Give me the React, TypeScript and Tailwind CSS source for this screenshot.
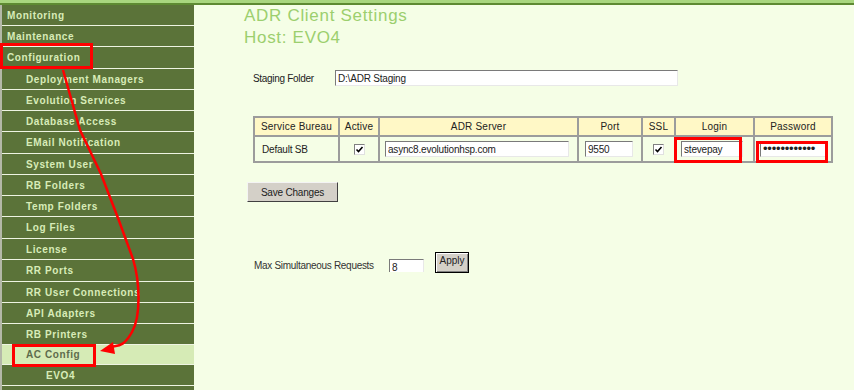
import React from 'react';

const navItems = [
  { label: 'Monitoring', indent: 'pl-[5px]', h: 'h-[21px]' },
  { label: 'Maintenance', indent: 'pl-[5px]', h: 'h-[21px]' },
  { label: 'Configuration', indent: 'pl-[5px]', h: 'h-[22px]' },
  { label: 'Deployment Managers', indent: 'pl-[24px]', h: 'h-[21px]' },
  { label: 'Evolution Services', indent: 'pl-[24px]', h: 'h-[21px]' },
  { label: 'Database Access', indent: 'pl-[24px]', h: 'h-[21px]' },
  { label: 'EMail Notification', indent: 'pl-[24px]', h: 'h-[22px]' },
  { label: 'System User', indent: 'pl-[24px]', h: 'h-[21px]' },
  { label: 'RB Folders', indent: 'pl-[24px]', h: 'h-[21px]' },
  { label: 'Temp Folders', indent: 'pl-[24px]', h: 'h-[21px]' },
  { label: 'Log Files', indent: 'pl-[24px]', h: 'h-[22px]' },
  { label: 'License', indent: 'pl-[24px]', h: 'h-[21px]' },
  { label: 'RR Ports', indent: 'pl-[24px]', h: 'h-[22px]' },
  { label: 'RR User Connections', indent: 'pl-[24px]', h: 'h-[21px]' },
  { label: 'API Adapters', indent: 'pl-[24px]', h: 'h-[21px]' },
  { label: 'RB Printers', indent: 'pl-[24px]', h: 'h-[21px]' },
  { label: 'AC Config', indent: 'pl-[24px]', h: 'h-[20px]', active: true },
  { label: 'EVO4', indent: 'pl-[44px]', h: 'h-[21px]' },
  { label: '', indent: 'pl-[24px]', h: 'h-[21px]' },
];

function CheckBox() {
  return (
    <span className="inline-flex w-[11px] h-[11px] bg-white border border-t-[#808080] border-l-[#808080] border-b-[#e0e0e0] border-r-[#e0e0e0] items-center justify-center align-middle">
      <svg width="9" height="9" viewBox="0 0 9 9">
        <path d="M1.5 4.5 L3.5 6.5 L7.5 2" fill="none" stroke="#000" strokeWidth="1.6" />
      </svg>
    </span>
  );
}

const inputCls =
  'bg-white border border-t-[#7a7a7a] border-l-[#7a7a7a] border-b-[#e8e8e8] border-r-[#e8e8e8] text-[10px] tracking-[-0.2px] text-[#222] px-[2px] outline-none';

export default function App() {
  return (
    <div
      className="w-[854px] h-[390px] overflow-hidden bg-[#f5fee6] relative"
      style={{ fontFamily: '"Liberation Sans", Arial, sans-serif' }}
    >
      {/* header stripe */}
      <div className="h-[3px] bg-[#a9d67f]" />
      <div className="h-[2px] bg-[#5e8a32]" />

      <div className="flex">
        {/* sidebar */}
        <div className="w-[194px] shrink-0 border-l-2 border-[#b4b8a8] bg-[#5b7339]">
          {navItems.map((item, i) => (
            <div
              key={i}
              className={`${item.h} ${item.indent} flex items-center border-b border-[#eef4e2] text-[10px] font-bold tracking-[0.6px] ${
                item.active ? 'bg-[#d6ebb6] text-[#5e6c4c]' : 'text-[#d8ecb8]'
              }`}
            >
              {item.label}
            </div>
          ))}
        </div>

        {/* content */}
        <div className="flex-1 pl-[50px]">
          <div className="text-[17px] leading-[22px] tracking-[0.7px] text-[#9ccf6e]">ADR Client Settings</div>
          <div className="text-[17px] leading-[22px] tracking-[0.7px] text-[#9ccf6e]">Host: EVO4</div>

          <div className="flex items-center mt-[21px] ml-[9px] h-[16px]">
            <span className="w-[82px] text-[10px] tracking-[-0.3px] text-[#222]">Staging Folder</span>
            <input readOnly value="D:\ADR Staging" className={`${inputCls} w-[343px] h-[16px]`} />
          </div>

          <table className="mt-[30px] ml-[9px] border-collapse table-fixed w-[578px] text-[10px] tracking-[-0.2px] text-[#222]">
            <colgroup>
              <col className="w-[85px]" />
              <col className="w-[40px]" />
              <col className="w-[199px]" />
              <col className="w-[64px]" />
              <col className="w-[33px]" />
              <col className="w-[79px]" />
              <col className="w-[78px]" />
            </colgroup>
            <thead>
              <tr className="h-[19px] bg-[#fff8c6]">
                {['Service Bureau', 'Active', 'ADR Server', 'Port', 'SSL', 'Login', 'Password'].map((h) => (
                  <th key={h} className="border-2 border-[#9c9c9c] font-normal text-center tracking-[0.2px] p-0">
                    {h}
                  </th>
                ))}
              </tr>
            </thead>
            <tbody>
              <tr className="h-[26px]">
                <td className="border-2 border-[#9c9c9c] pl-[7px]">Default SB</td>
                <td className="border-2 border-[#9c9c9c] text-center">
                  <CheckBox />
                </td>
                <td className="border-2 border-[#9c9c9c] pl-[5px]">
                  <input readOnly value="async8.evolutionhsp.com" className={`${inputCls} w-[184px] h-[16px] block`} />
                </td>
                <td className="border-2 border-[#9c9c9c] pl-[6px]">
                  <input readOnly value="9550" className={`${inputCls} w-[48px] h-[16px] block`} />
                </td>
                <td className="border-2 border-[#9c9c9c] text-center">
                  <CheckBox />
                </td>
                <td className="border-2 border-[#9c9c9c] pl-[5px]">
                  <input readOnly value="stevepay" className={`${inputCls} w-[62px] h-[16px] block`} />
                </td>
                <td className="border-2 border-[#9c9c9c] pl-[5px]">
                  <input
                    readOnly
                    type="password"
                    value="xxxxxxxxxxxx"
                    className="bg-white border border-t-[#7a7a7a] border-l-[#7a7a7a] border-b-[#e8e8e8] border-r-[#e8e8e8] text-[13px] text-[#222] px-[2px] outline-none w-[66px] h-[16px] block"
                  />
                </td>
              </tr>
            </tbody>
          </table>

          <button className="mt-[19px] ml-[3px] w-[91px] h-[20px] bg-[#d4d0c8] border border-t-[#f4f4f4] border-l-[#f4f4f4] border-b-[#404040] border-r-[#404040] text-[10px] tracking-[-0.2px] text-[#222] block">
            Save Changes
          </button>

          <div className="flex items-start mt-[50px] ml-[10px]">
            <span className="w-[135px] mt-[7px] text-[10px] tracking-[-0.3px] leading-[14px] text-[#333]">Max Simultaneous Requests</span>
            <input readOnly value="8" className={`${inputCls} w-[35px] h-[13px] mt-[7px] pt-[2px] leading-[11px] border-b-0`} />
            <button className="ml-[11px] w-[34px] h-[21px] bg-[#d4d0c8] border border-black shadow-[inset_1px_1px_0_#ffffff,inset_-1px_-1px_0_#808080] text-[10px] text-[#222] pb-[4px]">
              Apply
            </button>
          </div>
        </div>
      </div>

      {/* annotations */}
      <div className="absolute left-0 top-[43px] w-[93px] h-[26px] border-[3px] border-[#ff0000]" />
      <div className="absolute left-[12px] top-[344px] w-[84px] h-[23px] border-[3px] border-[#ff0000]" />
      <div className="absolute left-[674px] top-[137px] w-[68px] h-[26px] border-[3px] border-[#ff0000]" />
      <div className="absolute left-[756px] top-[141px] w-[72px] h-[22px] border-[3px] border-[#ff0000]" />
      <svg className="absolute left-0 top-0 pointer-events-none" width="854" height="390">
        <path
          d="M63 70 L80 130 L101 174 L118 218 L133 259 C 140 282, 141 316, 132 332 S 118 345, 110 347"
          fill="none"
          stroke="#ff0000"
          strokeWidth="2.5"
        />
        <polygon points="100,351 113,342 115,354" fill="#ff0000" />
      </svg>
    </div>
  );
}
